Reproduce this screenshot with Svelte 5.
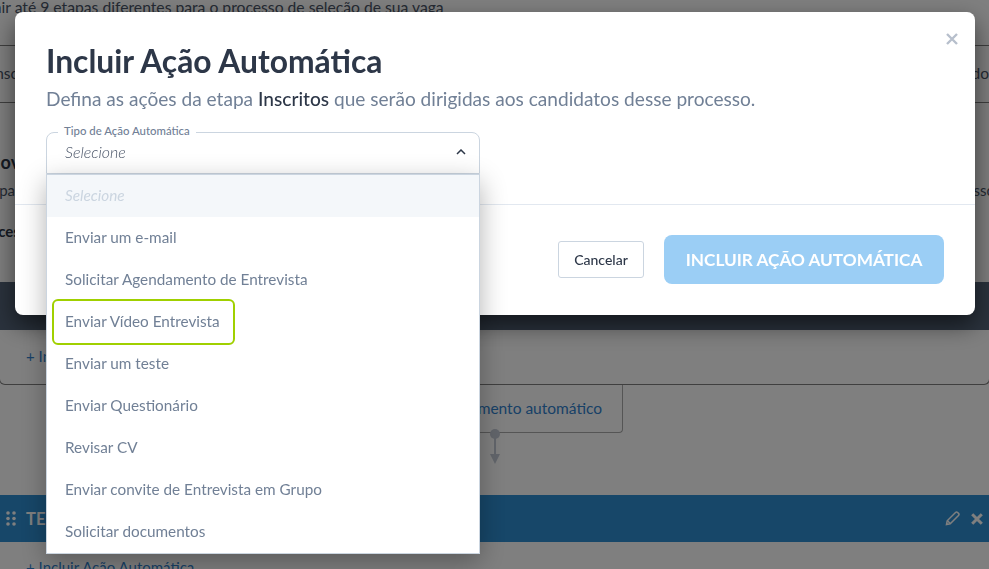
<script lang="ts">
	const options = [
		'Selecione',
		'Enviar um e-mail',
		'Solicitar Agendamento de Entrevista',
		'Enviar Vídeo Entrevista',
		'Enviar um teste',
		'Enviar Questionário',
		'Revisar CV',
		'Enviar convite de Entrevista em Grupo',
		'Solicitar documentos'
	];
	const focused = 3;
</script>

<div class="page">
	<p class="intro">Você pode definir até 9 etapas diferentes para o processo de seleção de sua vaga</p>
	<div class="tabs">
		<span>Inscritos</span>
		<span>Contratado</span>
	</div>
	<div class="stage-info">
		<h3>Nova etapa</h3>
		<p><span>Etapa para todos os candidatos</span><span>que se inscreveram no processo</span></p>
		<h4>Processo</h4>
	</div>
	<div class="dark-bar"></div>
	<div class="stage-body">
		<a href="#add">+ Incluir Ação Automática</a>
	</div>
	<div class="flow">
		<div class="flow-box"><a href="#auto">Incluir movimento automático</a></div>
		<svg class="connector" width="14" height="36" viewBox="0 0 14 36">
			<circle cx="7" cy="5" r="5" fill="#c4cad6" />
			<rect x="6" y="6" width="2" height="21" fill="#c4cad6" />
			<path d="M2 25h10L7 35z" fill="#c4cad6" />
		</svg>
	</div>
	<div class="blue-bar">
		<svg class="grip" width="10" height="15" viewBox="0 0 10 15" fill="#fff">
			<circle cx="2" cy="2" r="1.800" /><circle cx="8" cy="2" r="1.800" />
			<circle cx="2" cy="7.500" r="1.800" /><circle cx="8" cy="7.500" r="1.800" />
			<circle cx="2" cy="13" r="1.800" /><circle cx="8" cy="13" r="1.800" />
		</svg>
		<span class="bar-title">TESTE</span>
		<svg class="pencil" width="15" height="15" viewBox="0 0 15 15" fill="none" stroke="#fff" stroke-width="1.500">
			<path d="M1.500 13.500l.7-3.700L10.500 1.500a1.500 1.500 0 0 1 2.100 0l.9.9a1.500 1.500 0 0 1 0 2.100L5.200 12.800z" />
			<path d="M2.500 9.800l2.700 2.700" />
		</svg>
		<svg class="bar-close" width="12" height="12" viewBox="0 0 12 12" stroke="#fff" stroke-width="3">
			<path d="M1.200 1.200l9.600 9.600M10.800 1.200l-9.600 9.600" />
		</svg>
	</div>
	<div class="stage-foot"><a href="#add2">+ Incluir Ação Automática</a></div>
</div>

<div class="backdrop"></div>

<div class="modal">
	<button class="close" aria-label="Fechar">
		<svg width="12" height="12" viewBox="0 0 12 12" stroke="#b7bfcc" stroke-width="2.400">
			<path d="M1 1l10 10M11 1L1 11" />
		</svg>
	</button>
	<div class="modal-head">
		<h2>Incluir Ação Automática</h2>
		<p class="subtitle">Defina as ações da etapa <strong>Inscritos</strong> que serão dirigidas aos candidatos desse processo.</p>
		<div class="field">
			<span class="legend">Tipo de Ação Automática</span>
			<div class="select">
				<em>Selecione</em>
				<svg width="10" height="6" viewBox="0 0 10 6" fill="none" stroke="#2d3748" stroke-width="1.500">
					<path d="M1 5l4-4 4 4" />
				</svg>
			</div>
			<ul class="menu">
				{#each options as option, i}
					<li class:placeholder={i === 0}>
						<span class:focused={i === focused}>{option}</span>
					</li>
				{/each}
			</ul>
		</div>
	</div>
	<div class="modal-foot">
		<button class="cancel">Cancelar</button>
		<button class="submit">INCLUIR AÇÃO AUTOMÁTICA</button>
	</div>
</div>

<style>
	:global(body) {
		margin: 0;
		font-family: 'Lato', 'Liberation Sans', sans-serif;
		background: #fff;
		overflow: hidden;
	}

	.page {
		width: 989px;
		height: 569px;
		overflow: hidden;
		color: #4a5568;
		font-size: 15px;
	}

	.page a {
		color: #3182ce;
		text-decoration: none;
	}

	.intro {
		margin: 0 0 0 -110px;
		height: 45px;
		line-height: 14px;
		font-size: 15.700px;
		white-space: nowrap;
	}

	.tabs {
		height: 58px;
		box-sizing: border-box;
		border-top: 1px solid #7e7e7e;
		border-bottom: 1px solid #7e7e7e;
		display: flex;
		justify-content: space-between;
		align-items: center;
		margin-left: -9px;
		padding-bottom: 2px;
		white-space: nowrap;
		font-size: 15.500px;
	}

	.stage-info {
		height: 179px;
		padding-top: 47px;
		box-sizing: border-box;
		white-space: nowrap;
	}

	.stage-info h3 {
		margin: 0 0 6px -13px;
		font-size: 18px;
		line-height: 24px;
		color: #2d3748;
	}

	.stage-info p {
		margin: 0 -6px 21px -22px;
		font-size: 15px;
		line-height: 20px;
		display: flex;
		justify-content: space-between;
	}

	.stage-info h4 {
		margin: 0 0 0 -25px;
		font-size: 15px;
		line-height: 20px;
		color: #2d3748;
	}

	.dark-bar {
		height: 48px;
		background: #55657a;
	}

	.stage-body {
		height: 55px;
		box-sizing: border-box;
		margin: 0 -1px;
		padding: 16px 0 0 26px;
		border: 1px solid #7e7e7e;
		border-top: 0;
		border-radius: 0 0 6px 6px;
		line-height: 20px;
	}

	.flow {
		height: 110px;
		display: flex;
		flex-direction: column;
		align-items: flex-start;
		padding-left: 367px;
		box-sizing: border-box;
	}

	.flow-box {
		width: 256px;
		height: 48px;
		box-sizing: border-box;
		border: 1px solid #aaa;
		border-top: 0;
		border-radius: 0 0 4px 4px;
		padding: 13px 20px 0 0;
		text-align: right;
		line-height: 20px;
		white-space: nowrap;
		font-size: 15.500px;
	}

	.connector {
		margin: -4px 0 0 121px;
	}

	.blue-bar {
		height: 47px;
		background: #2e8ed2;
		display: flex;
		align-items: center;
		padding: 0 6px;
		color: #fff;
		font-weight: 700;
		font-size: 16.500px;
	}

	.grip {
		margin-right: 10px;
	}

	.bar-title {
		flex: 1;
	}

	.pencil {
		margin-right: 11px;
	}

	.stage-foot {
		padding: 15px 0 0 26px;
		line-height: 20px;
	}

	.backdrop {
		position: fixed;
		inset: 0;
		background: rgba(0, 0, 0, 0.5);
	}

	.modal {
		position: fixed;
		left: 15px;
		top: 12px;
		width: 960px;
		height: 303px;
		background: #fff;
		border-radius: 8px;
		box-shadow: 0 10px 25px rgba(0, 0, 0, 0.55);
		color: #718096;
	}

	.close {
		position: absolute;
		right: 17px;
		top: 21px;
		padding: 0;
		border: 0;
		background: none;
		display: flex;
	}

	.modal-head {
		height: 193px;
		box-sizing: border-box;
		padding: 29px 31px 0;
		border-bottom: 1px solid #e2e8f0;
	}

	h2 {
		margin: 0;
		font-size: 31.800px;
		line-height: 40px;
		font-weight: 700;
		color: #2d3748;
	}

	.subtitle {
		margin: 4px 0 0;
		font-size: 19.100px;
		line-height: 28px;
	}

	.subtitle strong {
		font-weight: 500;
		color: #2d3748;
	}

	.field {
		position: relative;
		width: 434px;
		margin-top: 19px;
	}

	.legend {
		position: absolute;
		left: 12px;
		top: -8px;
		padding: 0 6px;
		background: #fff;
		font-size: 11.400px;
		line-height: 14px;
		font-weight: 500;
	}

	.select {
		height: 42px;
		box-sizing: border-box;
		border: 1px solid #cbd5e0;
		border-radius: 8px 8px 0 0;
		display: flex;
		align-items: center;
		justify-content: space-between;
		padding: 0 13px 3px 18px;
		font-size: 16px;
	}

	.select em {
		font-weight: 300;
		color: #4a5568;
	}

	.menu {
		position: absolute;
		left: 0;
		right: 0;
		top: 42px;
		margin: 0;
		padding: 0;
		list-style: none;
		background: #fff;
		border: 1px solid #cbd5e0;
		box-shadow: 0 8px 25px rgba(0, 0, 0, 0.3);
	}

	.menu li {
		height: 42px;
		box-sizing: border-box;
		display: flex;
		align-items: center;
		padding: 0 0 2px 18px;
		font-size: 15.300px;
	}

	.menu li.placeholder {
		background: #f4f7fa;
		color: #cbd5e0;
		font-style: italic;
	}

	.focused {
		margin: 2px 0 0 -13px;
		padding: 9px 13px 11px 11px;
		border: 2px solid #a0d000;
		border-radius: 6px;
		line-height: 22px;
	}

	.modal-foot {
		height: 110px;
		display: flex;
		justify-content: flex-end;
		align-items: flex-start;
		gap: 20px;
		padding: 30px 31px 0 0;
		box-sizing: border-box;
	}

	.cancel {
		margin-top: 6px;
		width: 86px;
		height: 37px;
		background: #fff;
		border: 1px solid #cbd5e0;
		border-radius: 3px;
		color: #2d3748;
		font: 500 14px 'Lato', sans-serif;
	}

	.submit {
		width: 280px;
		height: 49px;
		background: #9bcef5;
		border: 0;
		border-radius: 8px;
		color: #fff;
		font: 700 17.200px 'Lato', sans-serif;
	}
</style>
